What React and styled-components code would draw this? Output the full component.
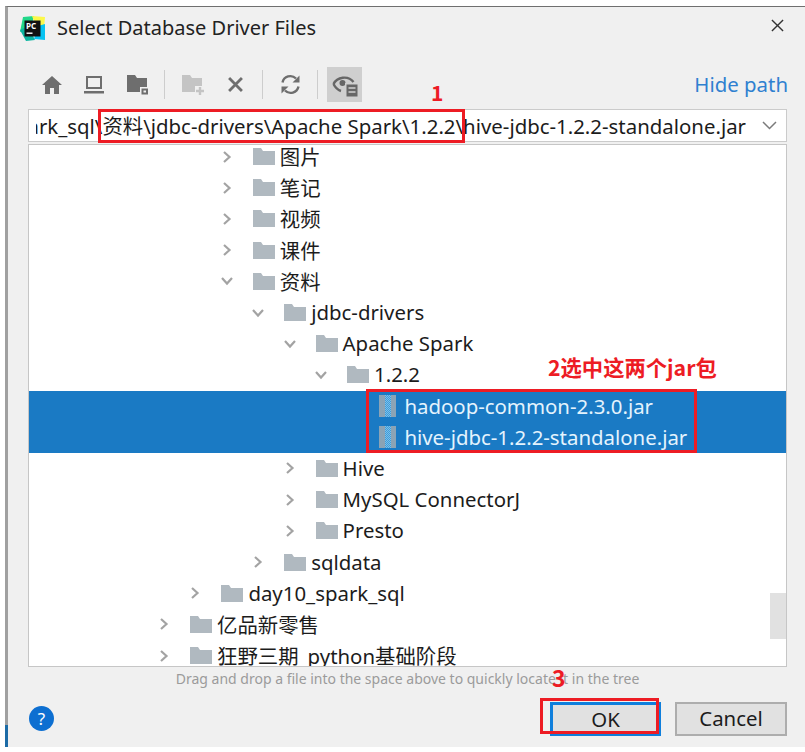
import React from "react";
import styled, { createGlobalStyle } from "styled-components";

const GlobalStyle = createGlobalStyle`
  html, body {
    margin: 0;
    padding: 0;
    background: #fff;
    font-family: "Noto Sans", "Noto Sans CJK SC", sans-serif;
  }
`;

const Page = styled.div`
  position: relative;
  width: 805px;
  height: 752px;
  overflow: hidden;
  background: #fff;
`;

const Dialog = styled.div`
  position: relative;
  box-sizing: border-box;
  height: 741px;
  margin: 6px 0 0 5px;
  background: #f0f0f0;
  border-top: 1px solid #6f6f6f;
  border-left: 3px solid #a0a0a0;
  color: #1c1c1c;
  &::before {
    content: "";
    position: absolute;
    left: -3px;
    bottom: 0;
    width: 3px;
    height: 22px;
    background: #1c6ba6;
  }
`;

const TitleBar = styled.div`
  display: flex;
  align-items: center;
  height: 42px;
  padding: 0 21px 0 12px;
  gap: 12px;
`;

const Title = styled.div`
  flex: 1;
  font-size: 20px;
  line-height: 28px;
  color: #222;
`;

const CloseSpot = styled.div`
  display: flex;
  margin-bottom: 6px;
`;

const Body = styled.div`
  padding: 0 18px 0 20px;
`;

const ToolRow = styled.div`
  display: flex;
  align-items: center;
  height: 35px;
  margin: 18px 0 7px;
  padding-left: 3px;
`;

const ToolButton = styled.div`
  display: flex;
  align-items: center;
  justify-content: center;
  width: ${(p) => p.$w || 42}px;
  height: 35px;
  background: ${(p) => (p.$on ? "#cfcfcf" : "transparent")};
`;

const ToolSep = styled.div`
  width: 1px;
  height: 29px;
  margin: 0 ${(p) => p.$gap || 7}px;
  background: #cdcdcd;
`;

const HideLink = styled.a`
  margin-left: auto;
  margin-right: -1px;
  margin-bottom: 2px;
  font-size: 20.4px;
  color: #2f80d0;
`;

const PathBox = styled.div`
  display: flex;
  align-items: center;
  box-sizing: border-box;
  height: 33px;
  background: #fff;
  border: 1px solid #cbcbcb;
`;

const PathClip = styled.div`
  display: flex;
  justify-content: flex-end;
  width: 710px;
  margin: 0 0 2px 7px;
  overflow: hidden;
  white-space: nowrap;
  font-size: 20.4px;
`;

const PathArrow = styled.div`
  display: flex;
  justify-content: center;
  flex: 1;
  padding-left: 7px;
`;

const Tree = styled.div`
  position: relative;
  box-sizing: border-box;
  height: 523px;
  margin-top: 2px;
  overflow: hidden;
  background: #fff;
  border: 1px solid #c6c6c6;
`;

const RowList = styled.div`
  margin-top: -4px;
`;

const Row = styled.div`
  display: flex;
  align-items: center;
  box-sizing: border-box;
  height: 31.19px;
  padding-left: ${(p) => 128 + p.$depth * 31.4}px;
  background: ${(p) => (p.$selected ? "#1a7ac4" : "transparent")};
  color: ${(p) => (p.$selected ? "#e4f3fd" : "#1c1c1c")};
  font-size: 20.4px;
  white-space: nowrap;
`;

const Twisty = styled.div`
  display: flex;
  align-items: center;
  width: 33px;
  flex-shrink: 0;
`;

const RowLabel = styled.span`
  margin: 0 0 1px ${(p) => p.$gap || 5}px;
`;

const ScrollThumb = styled.div`
  position: absolute;
  right: 0;
  top: 448px;
  width: 16px;
  height: 46px;
  background: #e1e1e1;
`;

const Hint = styled.div`
  height: 21px;
  margin-top: 1px;
  text-align: center;
  font-size: 14px;
  line-height: 21px;
  color: #9b9b9b;
`;

const Footer = styled.div`
  display: flex;
  align-items: center;
  height: 34px;
  margin-top: 13px;
`;

const HelpDot = styled.div`
  display: flex;
  align-items: center;
  justify-content: center;
  width: 25px;
  height: 25px;
  margin: 0 0 1px 1px;
  border-radius: 50%;
  background: #0d6fd1;
  color: #fff;
  font-size: 17px;
`;

const DialogButton = styled.button`
  box-sizing: border-box;
  width: ${(p) => p.$w}px;
  height: 34px;
  margin-left: ${(p) => p.$ml || 0}px;
  padding: 0 0 3px;
  background: #e1e1e1;
  border: ${(p) => (p.$primary ? "3px solid #0f7fdc" : "2px solid #adadad")};
  font-family: "Noto Sans", sans-serif;
  font-size: 20.4px;
  color: #1c1c1c;
`;

const RedBox = styled.div`
  position: absolute;
  left: ${(p) => p.$x}px;
  top: ${(p) => p.$y}px;
  width: ${(p) => p.$w}px;
  height: ${(p) => p.$h}px;
  box-sizing: border-box;
  border: 3px solid #ed1c24;
`;

const RedNote = styled.div`
  position: absolute;
  left: ${(p) => p.$x}px;
  top: ${(p) => p.$y}px;
  font-family: "Noto Sans CJK SC", "Noto Sans", sans-serif;
  font-weight: 700;
  font-size: ${(p) => p.$size || 21.3}px;
  line-height: 24px;
  color: #ed1c24;
  white-space: nowrap;
`;

const FolderSvg = styled.svg`
  flex-shrink: 0;
`;

const JarSvg = styled.svg`
  flex-shrink: 0;
  margin-left: 1px;
`;

const PyCharmLogo = () => (
  <svg width="25" height="25" viewBox="0 0 25 25">
    <path d="M3 1 L14 0 L11 12 L0 16 Z" fill="#21d789" />
    <path d="M0 14 L6 25 L15 24 L8 10 Z" fill="#0bb5a0" />
    <path d="M12 0 L25 1 L24 12 L16 10 Z" fill="#fcf84a" />
    <path d="M14 23 L25 24 L25 8 L18 10 Z" fill="#07c3f2" />
    <rect x="4.5" y="4.5" width="16" height="16" fill="#111" />
    <text x="6" y="12.5" fontFamily="Noto Sans, sans-serif" fontSize="8" fontWeight="700" fill="#fff">PC</text>
    <rect x="6.5" y="16.5" width="6" height="1.4" fill="#fff" />
  </svg>
);

const CloseIcon = ({ size = 13, stroke = "#333", width = 1.5 }) => (
  <svg width={size} height={size} viewBox="0 0 14 14">
    <path d="M1 1 L13 13 M13 1 L1 13" stroke={stroke} strokeWidth={width} fill="none" />
  </svg>
);

const HomeIcon = () => (
  <svg width="20" height="18" viewBox="0 0 20 18">
    <path d="M10 0 L20 9 L17 9 L17 18 L12 18 L12 12 L8 12 L8 18 L3 18 L3 9 L0 9 Z" fill="#6e6e6e" />
  </svg>
);

const MonitorIcon = () => (
  <svg width="20" height="18" viewBox="0 0 20 18">
    <path d="M3 1 H17 V12 H3 Z" fill="none" stroke="#6e6e6e" strokeWidth="2" />
    <rect x="0" y="15" width="20" height="2.5" fill="#6e6e6e" />
  </svg>
);

const ProjectFolderIcon = () => (
  <svg width="22" height="20" viewBox="0 0 22 20">
    <path d="M0 0 H8 L10 3 H20 V17 H0 Z" fill="#6e6e6e" />
    <rect x="13" y="12" width="9" height="8" fill="#f0f0f0" />
    <rect x="14.5" y="13.5" width="6.5" height="6" fill="#6e6e6e" />
    <rect x="16.5" y="15.5" width="2.5" height="2" fill="#f0f0f0" />
  </svg>
);

const NewFolderIcon = () => (
  <svg width="23" height="20" viewBox="0 0 23 20">
    <path d="M0 0 H8 L10 3 H20 V17 H0 Z" fill="#c4c4c4" />
    <rect x="13" y="11" width="10" height="9" fill="#f0f0f0" />
    <path d="M18 12 V20 M14 16 H22" stroke="#c4c4c4" strokeWidth="2.4" />
  </svg>
);

const RefreshIcon = () => (
  <svg width="21" height="21" viewBox="0 0 21 21" fill="none">
    <path d="M2.5 8.5 A8 8 0 0 1 16 4.5" stroke="#6e6e6e" strokeWidth="2.4" />
    <path d="M19.5 1.5 V8.5 H12.5 Z" fill="#6e6e6e" />
    <path d="M18.5 12.5 A8 8 0 0 1 5 16.5" stroke="#6e6e6e" strokeWidth="2.4" />
    <path d="M1.5 19.5 V12.5 H8.5 Z" fill="#6e6e6e" />
  </svg>
);

const EyeDocIcon = () => (
  <svg width="26" height="24" viewBox="0 0 26 24" fill="none">
    <path d="M1.5 11 C5 4 16 2 21.5 9" stroke="#666" strokeWidth="2.4" />
    <path d="M1.5 11 C3 14 6 17 9 18" stroke="#666" strokeWidth="2.4" />
    <circle cx="10.5" cy="10" r="3" fill="#666" />
    <rect x="13" y="10" width="13" height="14" fill="#cfcfcf" />
    <rect x="14.5" y="11.5" width="11" height="12" fill="#666" />
    <path d="M16.5 15 H23.5 M16.5 19 H23.5" stroke="#cfcfcf" strokeWidth="1.5" />
  </svg>
);

const DropArrow = () => (
  <svg width="15" height="9" viewBox="0 0 15 9" fill="none">
    <path d="M1 1 L7.5 7.5 L14 1" stroke="#7b7b7b" strokeWidth="1.5" />
  </svg>
);

const Chevron = ({ open }) => (
  <svg width="14" height="12" viewBox="0 0 14 12" fill="none">
    {open ? (
      <path d="M2 3 L7 8.5 L12 3" stroke="#a3a3a3" strokeWidth="2.2" />
    ) : (
      <path d="M4 1 L9.5 6 L4 11" stroke="#a3a3a3" strokeWidth="2.2" />
    )}
  </svg>
);

const FolderIcon = () => (
  <FolderSvg width="22" height="17" viewBox="0 0 22 17">
    <path d="M0 0 H8 L10 3 H22 V17 H0 Z" fill="#b0b9c0" />
  </FolderSvg>
);

// middle strip of the jar is dithered in the original icon
const JarIcon = () => (
  <JarSvg width="17" height="22" viewBox="0 0 17 22">
    <defs>
      <pattern id="jarDither" width="2" height="2" patternUnits="userSpaceOnUse">
        <rect width="2" height="2" fill="#3f9bd8" />
        <rect width="1" height="1" fill="#7cc0ea" />
        <rect x="1" y="1" width="1" height="1" fill="#7cc0ea" />
      </pattern>
    </defs>
    <rect x="0" y="0" width="6" height="22" fill="#8ba3b5" />
    <rect x="6" y="0" width="6" height="22" fill="url(#jarDither)" />
    <rect x="12" y="0" width="5" height="22" fill="#8ba3b5" />
  </JarSvg>
);

const rows = [
  { depth: 3, label: "图片" },
  { depth: 3, label: "笔记" },
  { depth: 3, label: "视频" },
  { depth: 3, label: "课件" },
  { depth: 3, label: "资料", open: true },
  { depth: 4, label: "jdbc-drivers", open: true },
  { depth: 5, label: "Apache Spark", open: true },
  { depth: 6, label: "1.2.2", open: true },
  { depth: 7, label: "hadoop-common-2.3.0.jar", jar: true },
  { depth: 7, label: "hive-jdbc-1.2.2-standalone.jar", jar: true },
  { depth: 5, label: "Hive" },
  { depth: 5, label: "MySQL ConnectorJ" },
  { depth: 5, label: "Presto" },
  { depth: 4, label: "sqldata" },
  { depth: 2, label: "day10_spark_sql" },
  { depth: 1, label: "亿品新零售" },
  { depth: 1, label: "狂野三期_python基础阶段" },
];

const TreeRow = ({ depth, label, open, jar }) => (
  <Row $depth={depth - 1} $selected={jar}>
    <Twisty>{!jar && <Chevron open={open} />}</Twisty>
    {jar ? <JarIcon /> : <FolderIcon />}
    <RowLabel $gap={jar ? 8 : 5}>{label}</RowLabel>
  </Row>
);

const App = () => (
  <Page>
    <GlobalStyle />
    <Dialog>
      <TitleBar>
        <PyCharmLogo />
        <Title>Select Database Driver Files</Title>
        <CloseSpot><CloseIcon /></CloseSpot>
      </TitleBar>
      <Body>
        <ToolRow>
          <ToolButton $w={42}><HomeIcon /></ToolButton>
          <ToolButton $w={42}><MonitorIcon /></ToolButton>
          <ToolButton $w={46}><ProjectFolderIcon /></ToolButton>
          <ToolSep $gap={3} />
          <ToolButton $w={50}><NewFolderIcon /></ToolButton>
          <ToolButton $w={34}><CloseIcon size={15} stroke="#6e6e6e" width={2.6} /></ToolButton>
          <ToolSep $gap={10} />
          <ToolButton $w={34}><RefreshIcon /></ToolButton>
          <ToolSep $gap={9.5} />
          <ToolButton $w={35} $on><EyeDocIcon /></ToolButton>
          <HideLink>Hide path</HideLink>
        </ToolRow>
        <PathBox>
          <PathClip>day10_spark_sql\资料\jdbc-drivers\Apache Spark\1.2.2\hive-jdbc-1.2.2-standalone.jar</PathClip>
          <PathArrow><DropArrow /></PathArrow>
        </PathBox>
        <Tree>
          <RowList>
            {rows.map((r) => (
              <TreeRow key={r.label} {...r} />
            ))}
          </RowList>
          <ScrollThumb />
        </Tree>
        <Hint>Drag and drop a file into the space above to quickly locate it in the tree</Hint>
        <Footer>
          <HelpDot>?</HelpDot>
          <DialogButton $primary $w={111} $ml={496}>OK</DialogButton>
          <DialogButton $w={112} $ml={14}>Cancel</DialogButton>
        </Footer>
      </Body>
    </Dialog>
    <RedBox $x={98} $y={109} $w={367} $h={34} />
    <RedBox $x={366} $y={389} $w={331} $h={64} />
    <RedBox $x={540} $y={698} $w={119} $h={36} />
    <RedNote $x={431} $y={80} $size={21}>1</RedNote>
    <RedNote $x={548} $y={355}>2选中这两个jar包</RedNote>
    <RedNote $x={552} $y={665} $size={23}>3</RedNote>
  </Page>
);

export default App;
